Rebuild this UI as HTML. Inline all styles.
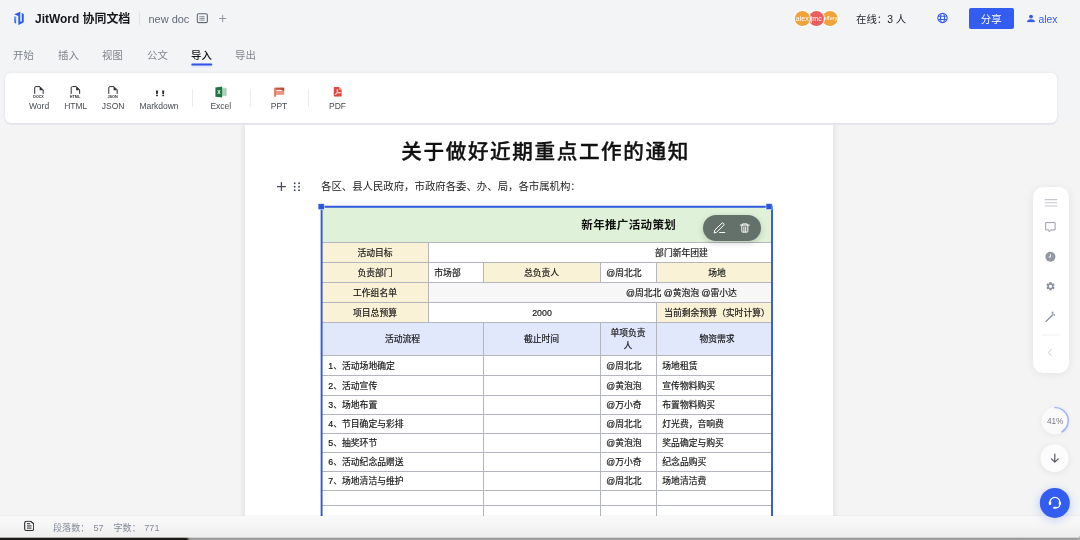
<!DOCTYPE html>
<html lang="zh-CN">
<head>
<meta charset="utf-8">
<title>JitWord 协同文档</title>
<style>
*{box-sizing:border-box;margin:0;padding:0}
html,body{width:1080px;height:540px;overflow:hidden}
body{position:relative;background:#f4f4f4;font-family:"Liberation Sans","Noto Sans CJK SC",sans-serif;color:#1f2329;-webkit-font-smoothing:antialiased}
.a{position:absolute;white-space:nowrap;line-height:1}
/* header */
.brand{left:35px;top:10.5px;font-size:11.95px;font-weight:700;color:#15171a;line-height:16px}
.hsep{left:139px;top:12px;width:1px;height:12.5px;background:#e1e3e8}
.docname{left:148.4px;top:12px;font-size:11px;color:#636a79;line-height:14px}
.plus{left:217px;top:9px;font-size:14px;color:#7b8190;line-height:18px;font-weight:300}
.tab{top:48.5px;font-size:10.4px;color:#80848c;line-height:14px}
.tab.on{color:#15171a;font-weight:500}
.tabline{left:191px;top:63px;width:21px;height:2.4px;border-radius:1.2px;background:#2f54eb;transform:translate(.3px,.6px);box-shadow:0 1px 2px rgba(47,84,235,.18)}

.av{top:11px;width:14.7px;height:14.7px;border-radius:50%;box-shadow:0 0 0 1.1px #fff;color:#fff;font-size:7px;display:flex;align-items:center;justify-content:center;overflow:hidden;line-height:1;padding-top:.5px}
.online{left:856px;top:12.6px;font-size:10.4px;line-height:14px;color:#1f2329}
.share{left:969px;top:8px;width:44.5px;height:21px;border-radius:2px;background:#335cf0;color:#fff;font-size:10.4px;display:flex;align-items:center;justify-content:center;padding-top:3.4px}
.uname{left:1038.6px;top:12.6px;font-size:10.3px;line-height:14px;color:#3559ee}
/* toolbar */
.toolbar{left:5px;top:73px;width:1051.5px;height:50px;background:#fff;border-radius:6px;box-shadow:0 0 3px rgba(60,70,100,.10)}
.tl{top:101px;font-size:8.5px;color:#464a50;line-height:10px;transform:translateX(-50%)}
.tsep{top:89px;width:1px;height:18px;background:#ececee}
/* page */
.page{left:245px;top:110px;width:588.3px;height:430px;background:#fff;box-shadow:0 0 7px rgba(0,0,0,.11)}
.h1{left:251.6px;width:588px;top:137.4px;text-align:center;font-size:20.6px;letter-spacing:1.6px;font-weight:500;-webkit-text-stroke:.35px #111;color:#111;line-height:30px}
.para{left:321px;top:180px;font-size:10.4px;color:#222;line-height:14px}
/* table */
.tbl{left:322px;top:207px;width:450px;height:312px;overflow:hidden;background:#fff}
.c{position:absolute;font-size:8.8px;line-height:11px;color:#161616;padding-top:2px;-webkit-text-stroke:.18px #161616;white-space:nowrap;display:flex;align-items:center}
.c.m{justify-content:center}
.hl{position:absolute;left:0;width:450px;height:1px;background:#b4b6be}
.vl{position:absolute;width:1px;background:#b4b6be}
.y{background:#faf2d6}
.b{background:#e1e8fc}
.g{background:#dff2d9}

.tt{font-size:11.5px;letter-spacing:.35px;font-weight:700;color:#111;position:relative;top:.4px;left:.2px;-webkit-text-stroke:0}
.gr{background:#f7f7f8}
.pill{left:702.9px;top:214.8px;width:58px;height:26.6px;border-radius:13.3px;background:#64716b;box-shadow:0 2px 6px rgba(0,0,0,.18)}
/* status bar */
.status{left:0;top:516px;width:1080px;height:24px;background:linear-gradient(#f9f9f9,#f5f5f5 40%,#ececec);box-shadow:0 -.5px 2px rgba(0,0,0,.09)}
.st{top:522.7px;font-size:9.1px;color:#848b9a;line-height:10px}
/* side */
.side{left:1033px;top:187.3px;width:36px;height:185.7px;background:#fff;border-radius:10px;box-shadow:0 1px 8px rgba(0,0,0,.08)}
</style>
</head>
<body>
<div id="root" style="position:absolute;left:0;top:0;width:1080px;height:540px;will-change:transform">
<div class="a" style="left:0;top:0;width:1080px;height:123px;background:#f3f4f6"></div>
<!-- header -->
<svg class="a" style="left:13px;top:11px" width="12.8" height="15" viewBox="0 0 12 15" preserveAspectRatio="none"><defs><linearGradient id="lg" x1="0" y1="0" x2="0" y2="1"><stop offset="0" stop-color="#66a6fa"/><stop offset="1" stop-color="#2c62f2"/></linearGradient></defs><path d="M1.1 5.1 L2.95 5.8 V12.7 L1.1 11.6 Z" fill="url(#lg)"/><path d="M1.1 3.3 L6.8 0.7 V10.4 H8.2 V2.1 L10.1 3 V11.3 L5.2 14.1 H5 V5.1 Z" fill="#2b5df1"/></svg>
<div class="a brand">JitWord 协同文档</div>
<div class="a hsep"></div>
<div class="a docname">new doc</div>
<svg class="a" style="left:196px;top:12px;transform:translate(0.20px,0.70px)" width="12.2" height="11" viewBox="0 0 12.2 11" fill="none" stroke="#5d6474" stroke-width="1.1"><rect x="1.05" y="1.05" width="10.1" height="8.9" rx="1.5"/><path d="M4 4h4.4M4 5.7h4.4M4 7.4h4.4M2.7 4h.7M2.7 5.7h.7M2.7 7.4h.7" stroke-width=".75"/></svg>
<svg class="a" style="left:218px;top:14px;transform:translate(0.70px,0.50px)" width="8" height="8" viewBox="0 0 8 8" stroke="#868b96" stroke-width=".9" fill="none"><path d="M4 0.3V7.7M0.3 4H7.7"/></svg>

<div class="a tab" style="left:13px">开始</div>
<div class="a tab" style="left:58px">插入</div>
<div class="a tab" style="left:102px">视图</div>
<div class="a tab" style="left:147px">公文</div>
<div class="a tab on" style="left:191px">导入</div>
<div class="a tab" style="left:235px">导出</div>
<div class="a tabline"></div>

<!-- header right -->

<div class="a av" style="left:794px;transform:translate(.9px,.1px);background:#f0a23b;z-index:3">alex</div>
<div class="a av" style="left:808px;transform:translate(.9px,.1px);background:#ea5f5e;z-index:2">jmc</div>
<div class="a av" style="left:822px;transform:translate(.5px,.1px);background:#f0a23b;z-index:1;font-size:5.6px">jeffery</div>
<div class="a online">在线：3 人</div>
<svg class="a" style="left:937px;top:12px;transform:translate(0.00px,0.40px)" width="11" height="11" viewBox="0 0 11 11" fill="none" stroke="#3559ee" stroke-width="1.05"><circle cx="5.5" cy="5.5" r="4.7"/><ellipse cx="5.5" cy="5.5" rx="2" ry="4.7"/><path d="M1 3.9h9M1 7.1h9"/></svg>
<div class="a share">分享</div>
<svg class="a" style="left:1027px;top:14px;transform:translate(0.00px,0.60px)" width="8" height="8" viewBox="0 0 8 8" fill="#3559ee"><circle cx="4" cy="2" r="1.9"/><path d="M0.3 7.7 V6.6 Q0.3 4.6 4 4.6 Q7.7 4.6 7.7 6.6 V7.7 Z"/></svg>
<div class="a uname">alex</div>


<!-- page -->
<div class="a page"></div>
<div class="a h1">关于做好近期重点工作的通知</div>
<div class="a para">各区、县人民政府，市政府各委、办、局，各市属机构：</div>
<div class="a tbl">
<div class="c g m" style="left:0px;top:0px;width:613px;height:35px;"><b class="tt">新年推广活动策划</b></div>
<div class="c y m" style="left:0px;top:35px;width:106px;height:20px;">活动目标</div>
<div class="c  m" style="left:106px;top:35px;width:507px;height:20px;">部门新年团建</div>
<div class="c y m" style="left:0px;top:55px;width:106px;height:20px;">负责部门</div>
<div class="c  " style="left:106px;top:55px;width:55px;height:20px;padding-left:6.3px;">市场部</div>
<div class="c y m" style="left:161px;top:55px;width:117px;height:20px;">总负责人</div>
<div class="c  " style="left:278px;top:55px;width:56px;height:20px;padding-left:6.3px;">@周北北</div>
<div class="c y m" style="left:334px;top:55px;width:122px;height:20px;">场地</div>
<div class="c y m" style="left:0px;top:75px;width:106px;height:20px;">工作组名单</div>
<div class="c gr m" style="left:106px;top:75px;width:507px;height:20px;">@周北北 @黄泡泡 @雷小达</div>
<div class="c y m" style="left:0px;top:95px;width:106px;height:20px;">项目总预算</div>
<div class="c  m" style="left:106px;top:95px;width:228px;height:20px;">2000</div>
<div class="c y m" style="left:334px;top:95px;width:122px;height:20px;">当前剩余预算（实时计算）</div>
<div class="c b m" style="left:0px;top:115px;width:161px;height:33px;">活动流程</div>
<div class="c b m" style="left:161px;top:115px;width:117px;height:33px;">截止时间</div>
<div class="c b m" style="left:278px;top:115px;width:56px;height:33px;text-align:center;line-height:12.8px;padding-top:3px;">单项负责<br>人</div>
<div class="c b m" style="left:334px;top:115px;width:122px;height:33px;">物资需求</div>
<div class="c b m" style="left:456px;top:115px;width:157px;height:33px;"></div>
<div class="c  " style="left:0px;top:148px;width:161px;height:20px;padding-left:6.3px;">1、活动场地确定</div>
<div class="c  " style="left:278px;top:148px;width:56px;height:20px;padding-left:6.3px;">@周北北</div>
<div class="c  " style="left:334px;top:148px;width:122px;height:20px;padding-left:6.3px;">场地租赁</div>
<div class="c  " style="left:0px;top:168px;width:161px;height:20px;padding-left:6.3px;">2、活动宣传</div>
<div class="c  " style="left:278px;top:168px;width:56px;height:20px;padding-left:6.3px;">@黄泡泡</div>
<div class="c  " style="left:334px;top:168px;width:122px;height:20px;padding-left:6.3px;">宣传物料购买</div>
<div class="c  " style="left:0px;top:188px;width:161px;height:19px;padding-left:6.3px;">3、场地布置</div>
<div class="c  " style="left:278px;top:188px;width:56px;height:19px;padding-left:6.3px;">@万小奇</div>
<div class="c  " style="left:334px;top:188px;width:122px;height:19px;padding-left:6.3px;">布置物料购买</div>
<div class="c  " style="left:0px;top:207px;width:161px;height:19px;padding-left:6.3px;">4、节目确定与彩排</div>
<div class="c  " style="left:278px;top:207px;width:56px;height:19px;padding-left:6.3px;">@周北北</div>
<div class="c  " style="left:334px;top:207px;width:122px;height:19px;padding-left:6.3px;">灯光费，音响费</div>
<div class="c  " style="left:0px;top:226px;width:161px;height:19px;padding-left:6.3px;">5、抽奖环节</div>
<div class="c  " style="left:278px;top:226px;width:56px;height:19px;padding-left:6.3px;">@黄泡泡</div>
<div class="c  " style="left:334px;top:226px;width:122px;height:19px;padding-left:6.3px;">奖品确定与购买</div>
<div class="c  " style="left:0px;top:245px;width:161px;height:19px;padding-left:6.3px;">6、活动纪念品赠送</div>
<div class="c  " style="left:278px;top:245px;width:56px;height:19px;padding-left:6.3px;">@万小奇</div>
<div class="c  " style="left:334px;top:245px;width:122px;height:19px;padding-left:6.3px;">纪念品购买</div>
<div class="c  " style="left:0px;top:264px;width:161px;height:19px;padding-left:6.3px;">7、场地清洁与维护</div>
<div class="c  " style="left:278px;top:264px;width:56px;height:19px;padding-left:6.3px;">@周北北</div>
<div class="c  " style="left:334px;top:264px;width:122px;height:19px;padding-left:6.3px;">场地清洁费</div>
<div class="hl" style="top:35px"></div>
<div class="hl" style="top:55px"></div>
<div class="hl" style="top:75px"></div>
<div class="hl" style="top:95px"></div>
<div class="hl" style="top:115px"></div>
<div class="hl" style="top:148px"></div>
<div class="hl" style="top:168px"></div>
<div class="hl" style="top:188px"></div>
<div class="hl" style="top:207px"></div>
<div class="hl" style="top:226px"></div>
<div class="hl" style="top:245px"></div>
<div class="hl" style="top:264px"></div>
<div class="hl" style="top:283px"></div>
<div class="hl" style="top:298px"></div>
<div class="vl" style="left:106px;top:35px;height:80px"></div>
<div class="vl" style="left:161px;top:55px;height:20px"></div>
<div class="vl" style="left:161px;top:115px;height:205px"></div>
<div class="vl" style="left:278px;top:55px;height:20px"></div>
<div class="vl" style="left:278px;top:115px;height:205px"></div>
<div class="vl" style="left:334px;top:55px;height:20px"></div>
<div class="vl" style="left:334px;top:95px;height:225px"></div>
</div>
<svg class="a" style="left:316px;top:200px" width="462" height="320" viewBox="316 200 462 320"><path d="M321.6 520 V206.8 H772 V520" fill="none" stroke="#2d59dc" stroke-width="1.9"/><rect x="318.1" y="203.7" width="6.1" height="6" fill="#2a56dc" stroke="#fff" stroke-width=".5"/><rect x="766" y="203.6" width="6.1" height="6" fill="#2a56dc" stroke="#fff" stroke-width=".5"/></svg>
<div class="a pill"></div>
<svg class="a" style="left:713px;top:222px" width="13" height="12" viewBox="0 0 13 12" fill="none" stroke="#fff" stroke-width="1" stroke-linecap="round" stroke-linejoin="round"><path d="M1.2 10.6 L1.9 8 L9 1.1 Q9.6 .6 10.2 1.1 L10.9 1.8 Q11.4 2.4 10.9 3 L3.9 10 Z"/><path d="M6.6 10.5 H11.8"/></svg>
<svg class="a" style="left:739px;top:222px;transform:translate(.5px,.6px)" width="11" height="11" viewBox="0 0 12 12" fill="none" stroke="#fff" stroke-width="1.05" stroke-linecap="round" stroke-linejoin="round"><path d="M0.9 2.7 H10.7"/><path d="M3.3 2.5 V1.4 H8.3 V2.5"/><path d="M2.5 2.9 V9.6 Q2.5 10.4 3.3 10.4 H8.3 Q9.1 10.4 9.1 9.6 V2.9"/><path d="M4.8 4.6 V10 M6.8 4.6 V10"/></svg>


<!-- toolbar -->
<div class="a" style="left:5px;top:100px;width:1051.5px;height:25.4px;border-radius:6px;background:#e9eaed"></div>
<div class="a toolbar"></div>
<svg class="a" style="left:0px;top:80px" width="200" height="24" viewBox="0 80 200 24"><g transform="translate(0,0)"><path d="M34.7 93.9 V87.8 Q34.7 86.6 35.9 86.6 H39.9 L43.15 89.9 V93.9" fill="none" stroke="#2b2d31" stroke-width="1"/><path d="M39.6 86.6 L43.15 90.2 H39.6 Z" fill="#2b2d31"/><text x="38.5" y="97.9" text-anchor="middle" font-family="Liberation Sans,sans-serif" font-weight="700" font-size="3.8" fill="#2b2d31" textLength="10.4" lengthAdjust="spacingAndGlyphs">DOCX</text></g><g transform="translate(36.5,0)"><path d="M34.7 93.9 V87.8 Q34.7 86.6 35.9 86.6 H39.9 L43.15 89.9 V93.9" fill="none" stroke="#2b2d31" stroke-width="1"/><path d="M39.6 86.6 L43.15 90.2 H39.6 Z" fill="#2b2d31"/><text x="38.5" y="97.9" text-anchor="middle" font-family="Liberation Sans,sans-serif" font-weight="700" font-size="3.8" fill="#2b2d31" textLength="10.4" lengthAdjust="spacingAndGlyphs">HTML</text></g><g transform="translate(74.05,0)"><path d="M34.7 93.9 V87.8 Q34.7 86.6 35.9 86.6 H39.9 L43.15 89.9 V93.9" fill="none" stroke="#2b2d31" stroke-width="1"/><path d="M39.6 86.6 L43.15 90.2 H39.6 Z" fill="#2b2d31"/><text x="38.5" y="97.9" text-anchor="middle" font-family="Liberation Sans,sans-serif" font-weight="700" font-size="3.8" fill="#2b2d31" textLength="10.2" lengthAdjust="spacingAndGlyphs">JSON</text></g></svg>
<div class="a tl" style="left:39.05px">Word</div>
<div class="a tl" style="left:75.75px">HTML</div>
<div class="a tl" style="left:113.05px">JSON</div>
<svg class="a" style="left:155px;top:90px" width="11" height="7" viewBox="0 0 11 7" fill="#2b2d31"><path d="M0.9 0.5 H3.1 L2.8 4.1 H1.2 Z"/><rect x="1.1" y="4.7" width="1.8" height="1.5"/><path d="M7.1 0.5 H9.3 L9 4.1 H7.4 Z"/><rect x="7.3" y="4.7" width="1.8" height="1.5"/></svg>
<div class="a tl" style="left:159px">Markdown</div>
<div class="a tsep" style="left:191.5px"></div>
<svg class="a" style="left:214px;top:85px" width="14" height="14" viewBox="214 85 14 14"><rect x="221" y="87.7" width="5.2" height="8.3" rx=".5" fill="#c9e2d1"/><path d="M224 87.7V96M221 89.8h5.2M221 91.9h5.2M221 94h5.2" stroke="#8cc0a0" stroke-width=".55" fill="none"/><path d="M226 88 V95.8" stroke="#6aa884" stroke-width=".5"/><path d="M215.4 87.4 L222.2 86.5 V97.6 L215.4 96.7 Z" fill="#217346"/><text x="218.8" y="93.9" text-anchor="middle" font-family="Liberation Sans,sans-serif" font-weight="700" font-size="5" fill="#fff">X</text></svg>
<div class="a tl" style="left:220.8px">Excel</div>
<div class="a tsep" style="left:250px"></div>
<svg class="a" style="left:273px;top:86px;transform:translate(0.50px,0.50px)" width="12" height="11" viewBox="0 0 12 11"><rect x="0.6" y="0.9" width="2.1" height="9.3" rx=".5" fill="#e17a63"/><rect x="2.6" y="1.2" width="8" height="7.1" fill="#e98d7b"/><rect x="2.6" y="1.2" width="8" height="1.9" fill="#b9563f"/><path d="M7.4 3.1 L10.6 1.9 V4.6 Z" fill="#c23c1f"/><path d="M2.9 3.4 H7.6 Q8.4 3.9 9 4.4 H2.9 Z" fill="#fff" opacity=".92"/><path d="M2.7 5.6h7.9M2.7 6.9h7.9" stroke="#f0a596" stroke-width=".5"/></svg>
<div class="a tl" style="left:279px">PPT</div>
<div class="a tsep" style="left:308px"></div>
<svg class="a" style="left:333px;top:86px;transform:translate(0.30px,0.70px)" width="9" height="10.4" viewBox="0 0 10 11.5" preserveAspectRatio="none"><path d="M1.3 0.3 H6.3 L9.3 3.3 V10.2 Q9.3 11.1 8.4 11.1 H1.3 Q0.4 11.1 0.4 10.2 V1.2 Q0.4 0.3 1.3 0.3 Z" fill="#e2473f"/><path d="M6.3 0.3 L9.3 3.3 H6.3 Z" fill="#f6b5ae"/><path d="M2 8.8 C3.4 7.8 4.6 5.6 4.7 3.6 C4.7 2.9 4 2.9 4 3.6 C4.2 5.4 6 7 7.8 7.1 C8.6 7.1 8.4 6.3 7.6 6.4 C5.6 6.5 3.4 7.4 2.3 9.1 Z" fill="none" stroke="#fff" stroke-width=".8" stroke-linejoin="round"/></svg>
<div class="a tl" style="left:337.5px">PDF</div>


<div class="a status"></div>
<div class="a" style="left:0;top:537px;width:1080px;height:3px;background:#9c9c9c;transform:translate(0,.7px)"></div>
<svg class="a" style="left:1070px;top:530px" width="10" height="10" viewBox="0 0 10 10"><path d="M5.5 10 Q9 9 10 5.5 V10 Z" fill="#a8a8a8"/></svg>
<div class="a" style="left:0;top:537px;width:190px;height:3px;background:linear-gradient(90deg,#1b1a16 98%,rgba(40,40,40,0));transform:translate(0,.8px)"></div>
<!-- side -->
<div class="a side"></div>

<svg class="a" style="left:1044px;top:198px" width="14" height="10" viewBox="0 0 14 10" stroke="#c3c6cc" stroke-width="1.1" fill="none"><path d="M0.8 1.6h12.4M0.8 4.8h12.4M0.8 8h12.4"/></svg>
<svg class="a" style="left:1044px;top:221px;transform:translate(0.40px,0.00px)" width="12" height="13" viewBox="0 0 12 13" fill="none" stroke="#9a9ea8" stroke-width="1" stroke-linejoin="round"><path d="M1.3 1.6 H10.7 V8.9 H6.2 L4.8 10.8 L4.5 8.9 H1.3 Z"/></svg>
<svg class="a" style="left:1045px;top:251px;transform:translate(0.00px,0.20px)" width="11" height="11" viewBox="0 0 11 11"><circle cx="5.4" cy="5.5" r="5" fill="#9498a4"/><path d="M5.4 3 V5.9 H3.7" fill="none" stroke="#fff" stroke-width=".9"/></svg>
<svg class="a" style="left:1045px;top:281px;transform:translate(0.20px,0.00px)" width="10.6" height="10.6" viewBox="0 0 24 24"><path fill="#8e93a0" d="M19.14 12.94c.04-.3.06-.61.06-.94 0-.32-.02-.64-.07-.94l2.03-1.58a.49.49 0 0 0 .12-.61l-1.92-3.32a.49.49 0 0 0-.59-.22l-2.39.96c-.5-.38-1.03-.7-1.62-.94l-.36-2.54a.484.484 0 0 0-.48-.41h-3.84c-.24 0-.43.17-.47.41l-.36 2.54c-.59.24-1.13.57-1.62.94l-2.39-.96a.49.49 0 0 0-.59.22L2.74 8.87c-.12.21-.08.47.12.61l2.03 1.58c-.05.3-.09.63-.09.94s.02.64.07.94l-2.03 1.58a.49.49 0 0 0-.12.61l1.92 3.32c.12.22.37.29.59.22l2.39-.96c.5.38 1.03.7 1.62.94l.36 2.54c.05.24.24.41.48.41h3.84c.24 0 .44-.17.47-.41l.36-2.54c.59-.24 1.13-.56 1.62-.94l2.39.96c.22.08.47 0 .59-.22l1.92-3.32c.12-.22.07-.47-.12-.61l-2.01-1.58zM12 15.6A3.6 3.6 0 1 1 12 8.4a3.6 3.6 0 0 1 0 7.2z"/></svg>
<svg class="a" style="left:1045px;top:311px" width="12" height="12" viewBox="0 0 12 12" fill="none" stroke="#81869a" stroke-width="1.1" stroke-linecap="round"><path d="M0.9 10.7 L7.4 4"/><path d="M7.6 0.9v2M6.6 1.9h2M9.2 3.4v1.2M8.6 4h1.2" stroke-width=".7"/></svg>
<div class="a" style="left:1042px;top:334px;width:18px;height:1px;background:#f0f0f2;transform:translate(0.00px,0.50px)"></div>
<svg class="a" style="left:1047px;top:348px" width="6" height="9" viewBox="0 0 6 9" fill="none" stroke="#c9ccd2" stroke-width="1"><path d="M4.6 1 L1.4 4.5 L4.6 8"/></svg>

<div class="a" style="left:1041px;top:407px;width:27px;height:27px;border-radius:50%;background:#fafafa;box-shadow:0 1px 6px rgba(0,0,0,.06);transform:translate(0.60px,0.20px)"></div>
<svg class="a" style="left:1040px;top:405px;transform:translate(0.00px,0.60px)" width="30.2" height="30.2" viewBox="0 0 30.2 30.2" fill="none"><path d="M15.1 1.9 A13.2 13.2 0 0 1 22.17 26.25" stroke="#a4b8f7" stroke-width="1.7" stroke-linecap="round"/><text x="15.2" y="18.1" text-anchor="middle" font-family="Liberation Sans,sans-serif" font-size="8.3" fill="#777b83">41%</text></svg>
<div class="a" style="left:1040px;top:444px;width:28.4px;height:28.4px;border-radius:50%;background:#fcfcfc;box-shadow:0 1px 7px rgba(0,0,0,.08);transform:translate(0.60px,0.20px)"></div>
<svg class="a" style="left:1049px;top:453px;transform:translate(0.80px,0.00px)" width="10" height="11" viewBox="0 0 10 11" fill="none" stroke="#55595f" stroke-width="1.2" stroke-linecap="round" stroke-linejoin="round"><path d="M5 1.2 V9 M1.6 5.8 L5 9.2 L8.4 5.8"/></svg>
<div class="a" style="left:1039px;top:487px;width:30px;height:30px;border-radius:50%;background:#335cf2;box-shadow:0 2px 10px rgba(51,92,242,.28);transform:translate(0.80px,0.90px)"></div>
<svg class="a" style="left:1044px;top:492px" width="22" height="22" viewBox="1044 492 22 22" fill="none" stroke="#fff" stroke-linecap="round"><path d="M1049.9 502.4 A5 5 0 0 1 1059.9 502.4" stroke-width="1.25"/><path d="M1059.9 504.6 Q1059.6 507.5 1056.2 507.8" stroke-width="1.1"/><g fill="#fff" stroke="none"><rect x="1048.8" y="501.2" width="2.4" height="3.8" rx="1"/><rect x="1058.7" y="501.4" width="2.3" height="3.6" rx="1"/><rect x="1053" y="506.7" width="3.8" height="2.1" rx="1"/></g></svg>



<svg class="a" style="left:24px;top:520px;transform:translate(0.00px,0.60px)" width="10.4" height="10.6" viewBox="0 0 10.4 10.6" fill="none" stroke="#25272b" stroke-width="1.1" stroke-linejoin="round"><path d="M2.6 0.7 H6.6 L9.7 3.2 V8.3 Q9.7 9.9 8.1 9.9 H2.3 Q0.7 9.9 0.7 8.3 V2.4 Q0.7 0.7 2.6 0.7 Z"/><path d="M3 3.1 H6.2 M3 5.3 H7.5 M3 7.5 H7.5" stroke-width="1"/></svg>
<svg class="a" style="left:277px;top:182px" width="9" height="9" viewBox="0 0 9 9" stroke="#474d5c" stroke-width="1.3" stroke-linecap="round" fill="none"><path d="M4.4 0.6V8.6M0.4 4.6H8.4"/></svg>
<svg class="a" style="left:293px;top:182px" width="8" height="9.4" viewBox="0 0 8 9" fill="#474d5c"><circle cx="1.7" cy="1.1" r=".95"/><circle cx="6.1" cy="1.1" r=".95"/><circle cx="1.7" cy="4.6" r=".95"/><circle cx="6.1" cy="4.6" r=".95"/><circle cx="1.7" cy="8.1" r=".95"/><circle cx="6.1" cy="8.1" r=".95"/></svg>
<!-- status -->
<div class="a st" style="left:53px">段落数：</div><div class="a st" style="left:93.5px">57</div>
<div class="a st" style="left:113.5px">字数：</div><div class="a st" style="left:144.3px">771</div>
</div>
</body>
</html>
